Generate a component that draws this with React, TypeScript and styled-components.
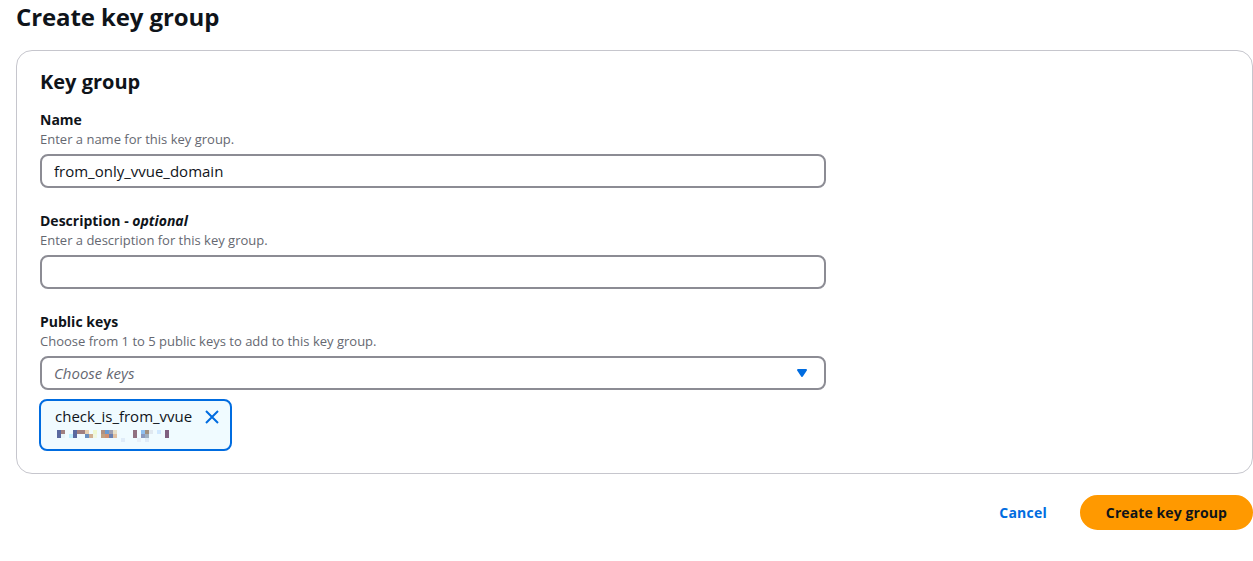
import React from "react";
import styled, { createGlobalStyle } from "styled-components";

const GlobalStyle = createGlobalStyle`
  html, body {
    margin: 0;
    padding: 0;
    background: #ffffff;
  }
  body {
    font-family: "Open Sans", "Noto Sans", Arial, sans-serif;
    color: #0f141a;
    -webkit-font-smoothing: antialiased;
  }
  * { box-sizing: border-box; }
`;

const Page = styled.div`
  padding: 2px 0 0 16px;
  width: 1253px;
`;

const PageTitle = styled.h1`
  margin: 0 0 18px 0;
  font-size: 24px;
  line-height: 30px;
  font-weight: 700;
  letter-spacing: -0.1px;
`;

const Container = styled.section`
  border: 1px solid #c6c6cd;
  border-radius: 16px;
  padding: 19px 23px 22px 23px;
  background: #ffffff;
`;

const ContainerTitle = styled.h2`
  margin: 0 0 17px 0;
  font-size: 20px;
  line-height: 24px;
  font-weight: 700;
`;

const Fields = styled.div`
  display: flex;
  flex-direction: column;
  gap: 24px;
`;

const Field = styled.div`
  display: flex;
  flex-direction: column;
  width: 786px;
`;

const Label = styled.label`
  font-size: 14px;
  line-height: 18px;
  font-weight: 700;
  color: #0f141a;
  i {
    font-style: italic;
    font-weight: 700;
  }
`;

const Hint = styled.div`
  font-size: 13px;
  line-height: 16px;
  color: #656871;
  margin: 2px 0 7px 0;
`;

const TextInput = styled.input`
  width: 100%;
  height: 34px;
  border: 2px solid #8c8c94;
  border-radius: 8px;
  padding: 0 12px;
  font-family: inherit;
  font-size: 15px;
  color: #0f141a;
  background: #ffffff;
  outline: none;
`;

const SelectTrigger = styled.div`
  width: 100%;
  height: 34px;
  border: 2px solid #8c8c94;
  border-radius: 8px;
  padding: 0 14px 0 12px;
  display: flex;
  align-items: center;
  justify-content: space-between;
  background: #ffffff;
`;

const Placeholder = styled.span`
  font-size: 15px;
  font-style: italic;
  color: #656871;
`;

const TokenList = styled.div`
  display: flex;
  margin: 9px 0 0 -1px;
`;

const Token = styled.div`
  display: flex;
  align-items: flex-start;
  border: 2px solid #006ce0;
  border-radius: 8px;
  background: #f0fbff;
  padding: 6px 10px 7px 14px;
`;

const TokenBody = styled.div`
  display: flex;
  flex-direction: column;
`;

const TokenLabel = styled.span`
  font-size: 15px;
  line-height: 18px;
  color: #0f141a;
`;

const Redacted = styled.div`
  display: grid;
  grid-template-columns: repeat(28, 4px);
  grid-auto-rows: 4px;
  margin: 5px 0 0 2px;
`;

const Cell = styled.span<{ $c: string }>`
  background: ${(p) => p.$c};
`;

const Dismiss = styled.button`
  border: none;
  background: none;
  padding: 0;
  margin: 2px 0 0 12px;
  width: 16px;
  height: 16px;
  display: flex;
  color: #006ce0;
  cursor: pointer;
`;

const Actions = styled.div`
  display: flex;
  justify-content: flex-end;
  align-items: center;
  margin-top: 21px;
  gap: 11px;
`;

const LinkButton = styled.button`
  border: 2px solid transparent;
  background: none;
  padding: 4px 20px;
  font-family: inherit;
  font-size: 14px;
  line-height: 22px;
  font-weight: 700;
  color: #006ce0;
  letter-spacing: 0.2px;
  cursor: pointer;
`;

const PrimaryButton = styled.button`
  border: 2px solid #ff9900;
  background: #ff9900;
  border-radius: 20px;
  padding: 4px 24px;
  font-family: inherit;
  font-size: 14px;
  line-height: 23px;
  font-weight: 700;
  color: #0f141a;
  letter-spacing: 0.1px;
  cursor: pointer;
`;

const _ = "";
const rows: string[][] = [
  ["#5a6aa0", "#a08080", _, _, "#5a6aa0", "#a08080", "#a08080", "#e8d0b0", _, "#f0f8d0", _, "#b09080", "#6a9ad0", "#a0a0b0", "#e8e0c8", _, _, _, _, "#907080", _, "#90c0f0", "#a09080", "#e0e8f0", _, "#d0e8ff", _, "#806080"],
  ["#5a6aa0", "#e8f4f8", _, "#c0f0ff", "#5a6aa0", _, _, "#6a90c0", "#d0b090", "#f0f8e0", _, "#c0a080", "#d09070", "#6a80b0", "#e0c0a0", _, _, _, _, "#907080", _, "#8a9ac0", "#a0b0c0", _, _, _, _, "#806080"],
  [_, _, _, _, _, _, _, _, _, _, _, _, _, _, _, _, "#e0ecf8", _, _, _, "#e8f0f8", _, "#e0ecf8", _, _, _, _, _],
];

const CaretDown = () => (
  <svg width="16" height="16" viewBox="0 0 16 16" aria-hidden="true">
    <path d="M4 5h8l-4 6-4-6z" fill="#006ce0" stroke="#006ce0" strokeWidth="2" strokeLinejoin="round" />
  </svg>
);

const CloseIcon = () => (
  <svg width="16" height="16" viewBox="0 0 16 16" aria-hidden="true">
    <path d="m2 2 12 12M14 2 2 14" fill="none" stroke="currentColor" strokeWidth="2" />
  </svg>
);

export default function App() {
  return (
    <>
      <GlobalStyle />
      <Page>
        <PageTitle>Create key group</PageTitle>
        <Container>
          <ContainerTitle>Key group</ContainerTitle>
          <Fields>
            <Field>
              <Label>Name</Label>
              <Hint>Enter a name for this key group.</Hint>
              <TextInput defaultValue="from_only_vvue_domain" />
            </Field>
            <Field>
              <Label>
                Description - <i>optional</i>
              </Label>
              <Hint>Enter a description for this key group.</Hint>
              <TextInput defaultValue="" />
            </Field>
            <Field>
              <Label>Public keys</Label>
              <Hint>Choose from 1 to 5 public keys to add to this key group.</Hint>
              <SelectTrigger>
                <Placeholder>Choose keys</Placeholder>
                <CaretDown />
              </SelectTrigger>
              <TokenList>
                <Token>
                  <TokenBody>
                    <TokenLabel>check_is_from_vvue</TokenLabel>
                    <Redacted>
                      {rows.flatMap((r, ri) =>
                        r.map((c, ci) => <Cell key={`${ri}-${ci}`} $c={c || "transparent"} />)
                      )}
                    </Redacted>
                  </TokenBody>
                  <Dismiss aria-label="Remove">
                    <CloseIcon />
                  </Dismiss>
                </Token>
              </TokenList>
            </Field>
          </Fields>
        </Container>
        <Actions>
          <LinkButton>Cancel</LinkButton>
          <PrimaryButton>Create key group</PrimaryButton>
        </Actions>
      </Page>
    </>
  );
}
